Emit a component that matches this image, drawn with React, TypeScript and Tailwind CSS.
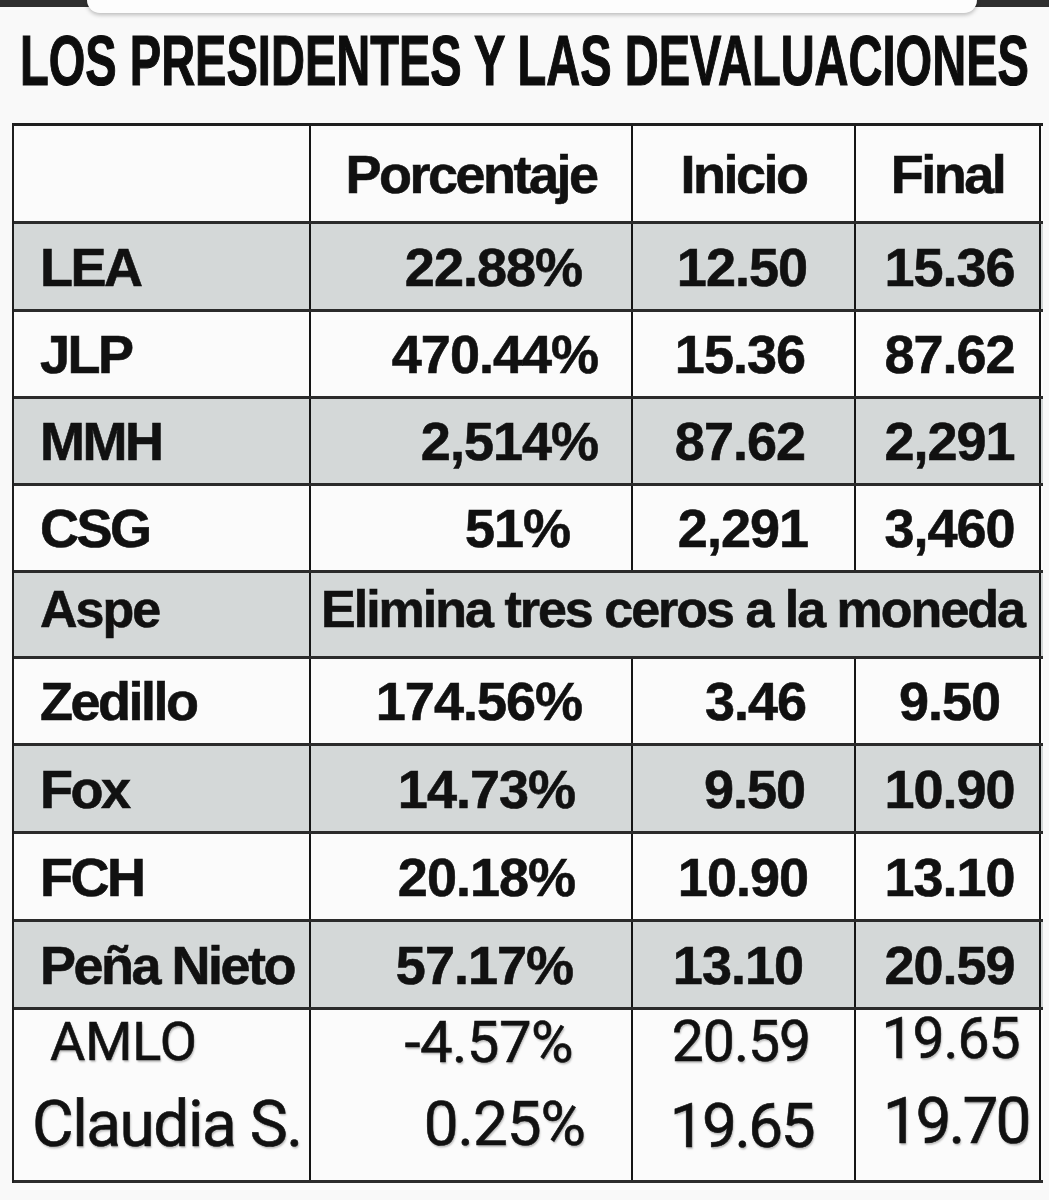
import React from "react";

type Row = {
  name: string;
  pct: string;
  ini: string;
  fin: string;
  grey: boolean;
  h: string;
  pctPr: string;
  iniPr: string;
};

const rows: Row[] = [
  { name: "LEA", pct: "22.88%", ini: "12.50", fin: "15.36", grey: true, h: "h-[88px]", pctPr: "pr-[49px]", iniPr: "pr-[47px]" },
  { name: "JLP", pct: "470.44%", ini: "15.36", fin: "87.62", grey: false, h: "h-[87px]", pctPr: "pr-[33px]", iniPr: "pr-[49px]" },
  { name: "MMH", pct: "2,514%", ini: "87.62", fin: "2,291", grey: true, h: "h-[87px]", pctPr: "pr-[33px]", iniPr: "pr-[49px]" },
  { name: "CSG", pct: "51%", ini: "2,291", fin: "3,460", grey: false, h: "h-[87px]", pctPr: "pr-[61px]", iniPr: "pr-[46px]" },
];

const rows2: Row[] = [
  { name: "Zedillo", pct: "174.56%", ini: "3.46", fin: "9.50", grey: false, h: "h-[87px]", pctPr: "pr-[49px]", iniPr: "pr-[48px]" },
  { name: "Fox", pct: "14.73%", ini: "9.50", fin: "10.90", grey: true, h: "h-[88px]", pctPr: "pr-[56px]", iniPr: "pr-[49px]" },
  { name: "FCH", pct: "20.18%", ini: "10.90", fin: "13.10", grey: false, h: "h-[88px]", pctPr: "pr-[56px]", iniPr: "pr-[46px]" },
  { name: "Peña Nieto", pct: "57.17%", ini: "13.10", fin: "20.59", grey: true, h: "h-[88px]", pctPr: "pr-[58px]", iniPr: "pr-[51px]" },
];

const bold =
  "font-['Liberation_Sans',Arial,sans-serif] font-bold text-[54px] leading-none text-[#111] [-webkit-text-stroke:0.6px_#111]";
const grid = "grid grid-cols-[297px_322px_223px_185px]";
const hline = "border-b-[3px] border-[#2b2b2b]";
const vline = "border-r-[2px] border-[#151515]";
const light =
  "font-['Roboto',sans-serif] font-normal leading-none text-[#111] [-webkit-text-stroke:0.6px_#111] [text-shadow:1px_2px_2px_rgba(0,0,0,0.25)]";

function DataRow({ r }: { r: Row }) {
  return (
    <div className={`${grid} ${r.h} ${hline} ${r.grey ? "bg-[#d4d8d8]" : "bg-[#fbfbfb]"}`}>
      <div className={`${vline} flex items-center pl-[26px] ${bold} tracking-[-2.5px] whitespace-nowrap`}>{r.name}</div>
      <div className={`${vline} flex items-center justify-end ${r.pctPr} ${bold} tracking-[-1px]`}>{r.pct}</div>
      <div className={`${vline} flex items-center justify-end ${r.iniPr} ${bold} tracking-[-1px]`}>{r.ini}</div>
      <div className={`${vline} flex items-center justify-center pl-[4px] ${bold} tracking-[-1px]`}>{r.fin}</div>
    </div>
  );
}

export default function App() {
  return (
    <div className="w-[1049px] h-[1200px] bg-[#f9f9f9] overflow-hidden">
      <div className="relative h-[14px]">
        <div className="h-[7px] bg-[#2f2f2f]" />
        <div className="absolute left-[87px] top-0 w-[890px] h-[13px] bg-[#fdfdfd] rounded-b-[16px] shadow-[0_2px_4px_rgba(0,0,0,0.25)]" />
      </div>
      <div className="mt-[12px] pl-[20px] h-[70px] whitespace-nowrap">
        <div className="inline-block origin-left scale-x-[0.672] font-['Liberation_Sans',Arial,sans-serif] font-bold text-[70px] leading-none text-[#0d0d0d] [-webkit-text-stroke:1.2px_#0d0d0d]">
          LOS PRESIDENTES Y LAS DEVALUACIONES
        </div>
      </div>
      <div className="mt-[27px] ml-[12px] w-[1031px] border-l-[2px] border-t-[3px] border-[#1e1e1e]">
        <div className={`${grid} h-[98px] ${hline} bg-[#fbfbfb]`}>
          <div className={vline} />
          <div className={`${vline} flex items-center justify-center ${bold} tracking-[-2.5px]`}>Porcentaje</div>
          <div className={`${vline} flex items-center justify-center ${bold} tracking-[-2.5px]`}>Inicio</div>
          <div className={`${vline} flex items-center justify-center ${bold} tracking-[-2.5px]`}>Final</div>
        </div>
        {rows.map((r) => (
          <DataRow key={r.name} r={r} />
        ))}
        <div className={`${grid} h-[86px] ${hline} bg-[#d4d8d8]`}>
          <div className={`${vline} flex items-center pl-[26px] pb-[12px] font-['Liberation_Sans',Arial,sans-serif] font-bold text-[52px] leading-none tracking-[-2px] text-[#111] [-webkit-text-stroke:0.6px_#111]`}>
            Aspe
          </div>
          <div className={`col-span-3 ${vline} flex items-center pl-[10px] pb-[12px] whitespace-nowrap font-['Liberation_Sans',Arial,sans-serif] font-bold text-[52px] leading-none tracking-[-2px] text-[#111] [-webkit-text-stroke:0.6px_#111]`}>
            Elimina tres ceros a la moneda
          </div>
        </div>
        {rows2.map((r) => (
          <DataRow key={r.name} r={r} />
        ))}
        <div className={`${grid} h-[62px] bg-[#fbfbfb] ${light}`}>
          <div className={`${vline} flex items-center pl-[36px] text-[54px]`}>AMLO</div>
          <div className={`${vline} flex items-center justify-end pr-[58px] text-[58px] tracking-[-0.5px]`}>-4.57%</div>
          <div className={`${vline} flex items-center justify-end pr-[44px] text-[57px] tracking-[-1px]`}>20.59</div>
          <div className={`${vline} flex items-center justify-center pl-[6px] pb-[6px] text-[57px] tracking-[-1px]`}>19.65</div>
        </div>
        <div className={`${grid} h-[111px] ${hline} bg-[#fbfbfb] ${light}`}>
          <div className={`${vline} flex items-center pl-[18px] pb-[2px] text-[64px] tracking-[-1.5px] whitespace-nowrap`}>Claudia S.</div>
          <div className={`${vline} flex items-center justify-end pr-[46px] pb-[4px] text-[62px] tracking-[-1px]`}>0.25%</div>
          <div className={`${vline} flex items-center justify-end pr-[41px] text-[62px] tracking-[-2.5px]`}>19.65</div>
          <div className={`${vline} flex items-center justify-center pl-[16px] pb-[8px] text-[64px] tracking-[-3px]`}>19.70</div>
        </div>
      </div>
    </div>
  );
}
